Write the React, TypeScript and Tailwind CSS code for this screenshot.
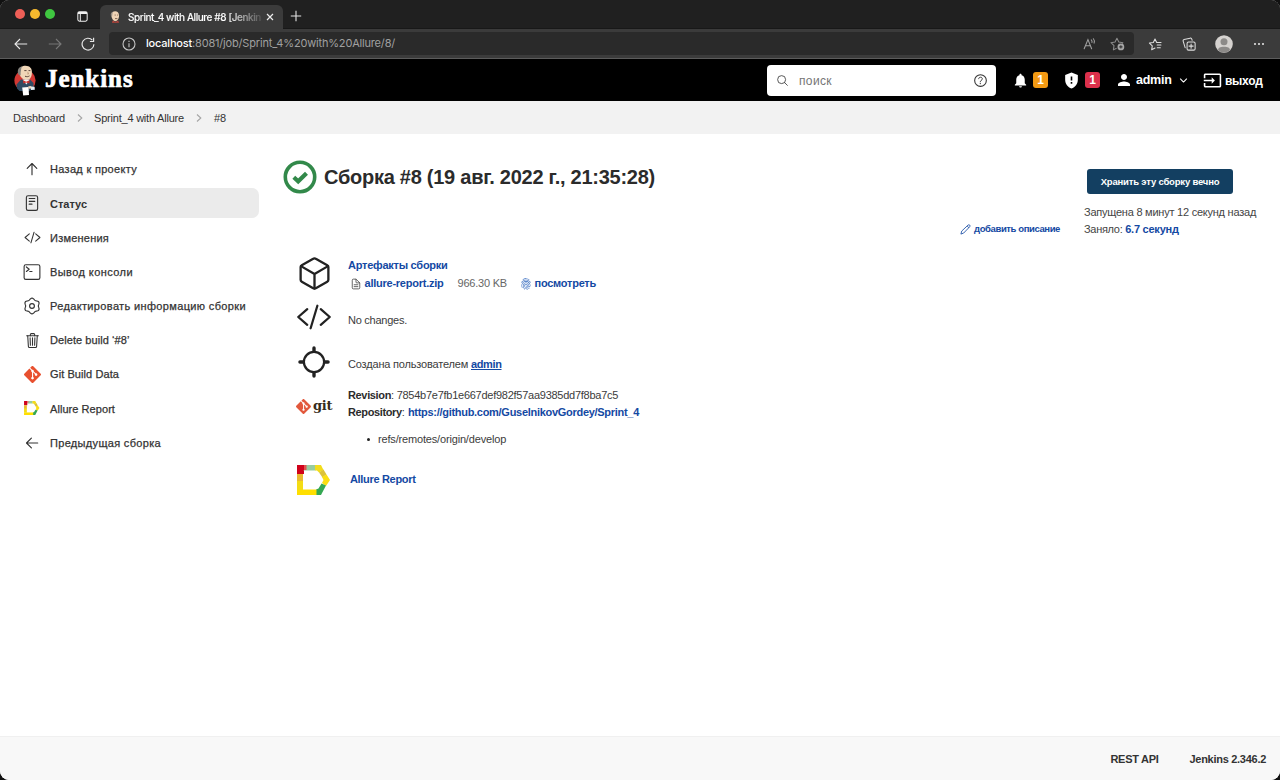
import type { ReactNode } from "react";
import {
  IoChevronDownOutline,
  IoCodeSlashOutline,
  IoCubeOutline,
  IoDocumentTextOutline,
  IoFingerPrintOutline,
  IoHelpCircleOutline,
  IoLocateOutline,
  IoReaderOutline,
  IoSearchOutline,
  IoTerminalOutline,
  IoTrashOutline,
} from "react-icons/io5";
import { MdGppMaybe, MdInput, MdNotifications, MdPerson } from "react-icons/md";
import { SiGit } from "react-icons/si";

function Butler({ className }: { className: string }) {
  return (
    <svg viewBox="0 0 24 31" className={className}>
      <circle cx="12" cy="15.500" r="10.600" fill="#d33833" />
      <path d="M3.500 19.500 L8 14.500 L17 14.500 L20.500 18 L20.500 24 L16 26 L6.500 26 L4 23.500 Z" fill="#2f4a63" />
      <path d="M6 7.500 C5.600 3 8.500 .8 12.500 .8 C16.800 .8 19.200 3.600 18.900 7.500 C18.900 11.500 17.500 14.600 14 14.800 C10 15 6.800 12 6 7.500 Z" fill="#f0d6b7" />
      <path d="M5.400 9.400 C3.800 5.500 5.600 2 9.200 1.300 C7.800 3.400 8.300 5.400 7.700 7.200 L7.600 10.500 Z" fill="#85827d" />
      <path d="M11.300 5.600h2.200M15.500 5.600h1.900M12 11.200c1.700.8 3.400.5 4.500-.3" stroke="#49352d" strokeWidth=".9" fill="none" />
      <path d="M14.600 6.800l1 2.100h-1.400" stroke="#b08a6a" strokeWidth=".7" fill="none" />
      <path d="M9.500 14.600 L13.400 19.500 L16.800 14.600 Z" fill="#f4f4f4" />
      <path d="M10 15.300 L13.200 16.700 L16.600 15.300 L16.500 18.500 L13.200 17.400 L10.200 18.500 Z" fill="#c92f2c" />
      <path d="M9.200 22.500 L15.600 22 L16 30 L10.200 30.600 Z" fill="#fff" />
      <path d="M17.800 21.500 L21.600 21.700 L21.800 24.700 L18 24.900 Z" fill="#e3ecf2" />
      <path d="M15.300 21.300 L18.200 21 L18.200 23.500 L15.600 23.700 Z" fill="#f0d6b7" />
    </svg>
  );
}

function AllureLogo({ className }: { className: string }) {
  return (
    <svg viewBox="0 0 33 30" className={className}>
      <path d="M0 0H7V9H0Z" fill="#d0021b" />
      <path d="M7 0H10V5H7Z" fill="#e0524f" />
      <path d="M9.500 0H18.500V5.500H6.500V5H9.500Z" fill="#97cc9f" />
      <path d="M18 0H24L26.500 5L22 7.500L20 5.500H18Z" fill="#f2dc1c" />
      <path d="M26.500 4.500L29.500 9.500L25.500 12.500L22 7.500Z" fill="#dcc23a" />
      <path d="M29.500 9.500L33 15L29 21L25 18L26.500 15L25 12Z" fill="#fbdf12" />
      <path d="M29 20.500L24 30H19V24.500L21.500 23.500L24.500 18.500Z" fill="#35a853" />
      <path d="M0 24.500H19.500V30H0Z" fill="#ffdf00" />
      <path d="M0 9H6V17H0Z" fill="#e9b930" />
      <path d="M0 16H6V25H0Z" fill="#f4dc14" />
    </svg>
  );
}

// Six soft lobes around a centre hole.
const gearOutline =
  "M" +
  Array.from({ length: 72 }, (_, i) => {
    const a = (i * Math.PI) / 36;
    const r = 7.1 + 0.75 * Math.cos(6 * a);
    return `${(9 + r * Math.sin(a)).toFixed(2)} ${(9 - r * Math.cos(a)).toFixed(2)}`;
  }).join("L") +
  "Z";

function GearIcon() {
  return (
    <svg viewBox="0 0 18 18" className="size-[18px]" fill="none" stroke="#333" strokeWidth="1.15">
      <path d={gearOutline} />
      <circle cx="9" cy="9" r="2.4" />
    </svg>
  );
}

function ReadAloudIcon() {
  return (
    <svg viewBox="0 0 16 16" className="size-[14px]" fill="none" stroke="#a2a2a2" strokeWidth="1.2" strokeLinecap="round">
      <path d="M2.500 13.500 L6.800 3 L11 13.500 M4 10h5.600M10.600 3.200c.9.8 1.100 2 .8 3M13 2c1.200 1.400 1.500 3.400.8 5" />
    </svg>
  );
}

function StarAddIcon() {
  return (
    <svg viewBox="0 0 16 16" className="size-[15px]" fill="none" stroke="#8c8c8c" strokeWidth="1.1" strokeLinejoin="round">
      <path d="M7 13l-3.400 1.800.7-4.500L1 7.100l4.400-.6L7.400 2.400l2 4.100 4.400.6-1 1" />
      <circle cx="11.600" cy="11.600" r="3.600" fill="#a5a5a5" stroke="none" />
      <path d="M11.600 9.900v3.400M9.900 11.600h3.400" stroke="#333" />
    </svg>
  );
}

function FavoritesIcon() {
  return (
    <svg viewBox="0 0 16 16" className="size-[14px]" fill="none" stroke="#dedede" strokeWidth="1.2" strokeLinejoin="round" strokeLinecap="round">
      <path d="M8 12.500l-3.800 2 .7-4.400L1.600 6.900l4.500-.7L8 2.200l1.900 4h5M10.500 9.200h4.300M10.500 12.200h3.600" />
    </svg>
  );
}

function CollectionsIcon() {
  return (
    <svg viewBox="0 0 16 16" className="size-[14px]" fill="none" stroke="#dedede" strokeWidth="1.2" strokeLinejoin="round" strokeLinecap="round">
      <rect x="5.800" y="5.800" width="9.200" height="9.200" rx="1.600" />
      <path d="M10.400 8v4.800M8 10.400h4.800M3.600 12.200L1.300 4.800c-.3-.9.1-1.600 1-1.900l7-1.600c1-.2 1.700.2 2 1.300l.3 1.200" />
    </svg>
  );
}

function Arrow({ className }: { className: string }) {
  return (
    <svg viewBox="0 0 14 14" className={className} fill="none" stroke="#333" strokeWidth="1.15" strokeLinecap="round" strokeLinejoin="round">
      <path d="M7 12.700V1.800M2.200 6.400L7 1.500l4.800 4.900" />
    </svg>
  );
}

function BrowserChrome() {
  return (
    <div className="h-[59px] border-b border-[#5c5c5c] bg-[#3b3b3b] font-['Inter',sans-serif]">
      <div className="flex h-[29px] items-end border-b border-[#181818] bg-[#202020]">
        <div className="flex h-7 w-[100px] shrink-0 items-center pl-[15px]">
          <span className="size-[10px] rounded-full bg-[#ee5f57]" />
          <span className="ml-[5px] size-[10px] rounded-full bg-[#f6b92e]" />
          <span className="ml-[5px] size-[10px] rounded-full bg-[#3fc640]" />
          <svg viewBox="0 0 12 12" className="mt-[5px] ml-[22px] size-[11px]" fill="none" stroke="#f0f0f0" strokeWidth="1.1">
            <rect x=".9" y=".9" width="10.200" height="10.200" rx="1.800" />
            <path d="M1 2.200h10" strokeWidth="2" />
            <path d="M3.600 3v8" />
          </svg>
        </div>
        <div className="-mb-px flex h-6 w-[183px] items-center rounded-t-md bg-[#3b3b3b] pl-[9px]">
          <svg viewBox="0 0 12 13" className="size-3">
            <path d="M2 4C2 1.500 4 .4 6.200 .4S10.400 2 10.400 5 9 11 6.400 11 2 7 2 4Z" fill="#eed3b5" />
            <path d="M1.800 6C.8 3.400 1.600 1.600 4 .9 3 2.400 3.200 4 2.900 5.600Z" fill="#948b82" />
            <path d="M3.600 10.400l2.800 1.400 3-1.400 1 2.400H2.600Z" fill="#b8433b" />
            <path d="M5.600 4.400h1.200M8.400 4.400h1M6 8.200h2.600" stroke="#5c4033" strokeWidth=".8" />
          </svg>
          <span className="ml-[7px] w-[133px] bg-gradient-to-r from-white from-75% to-[#555] bg-clip-text text-[10px] leading-4 font-medium tracking-[-0.42px] whitespace-nowrap text-transparent [-webkit-text-stroke:0.2px_transparent]">
            Sprint_4 with Allure #8 [Jenkin
          </span>
          <svg viewBox="0 0 8 8" className="ml-[5px] size-2" stroke="#ececec" strokeWidth="1.2">
            <path d="M1 1l6 6M7 1L1 7" />
          </svg>
        </div>
        <svg viewBox="0 0 12 12" className="mb-[6px] ml-[7px] size-[12px]" stroke="#e4e4e4" strokeWidth="1.1">
          <path d="M6 .8v10.400M.8 6h10.400" />
        </svg>
      </div>
      <div className="flex h-[29px] items-center">
        <svg viewBox="0 0 14 12" className="ml-[14px] h-3 w-3.5" fill="none" stroke="#e6e6e6" strokeWidth="1.1">
          <path d="M13.200 6H1.200M6 1L1 6l5 5" />
        </svg>
        <svg viewBox="0 0 14 12" className="ml-5 h-3 w-3.5" fill="none" stroke="#777" strokeWidth="1.1">
          <path d="M.8 6h12M8 1l5 5-5 5" />
        </svg>
        <svg viewBox="0 0 14 14" className="ml-[19px] size-3.5" fill="none" stroke="#e6e6e6" strokeWidth="1.2">
          <path d="M12.900 7.200A5.900 5.900 0 1 1 11.400 3.200M12.600 .8v3.700H8.900" />
        </svg>
        <div className="ml-[14px] flex h-[23px] w-[1025px] items-center rounded bg-[#2a2a2a] pl-[13px] text-[11px]">
          <svg viewBox="0 0 14 14" className="size-3.5" fill="none" stroke="#c4c4c4" strokeWidth="1.1">
            <circle cx="7" cy="7" r="6" />
            <path d="M7 6.200v4M7 3.800v1.200" />
          </svg>
          <span className="ml-[10px] font-medium tracking-[-0.2px] text-white">localhost</span>
          <span className="tracking-[-0.18px] text-[#a0a0a0]">:8081/job/Sprint_4%20with%20Allure/8/</span>
          <div className="mr-[9px] ml-auto flex items-center gap-[14px]">
            <ReadAloudIcon />
            <StarAddIcon />
          </div>
        </div>
        <div className="ml-[14px] flex items-center">
          <FavoritesIcon />
          <span className="ml-5 flex">
            <CollectionsIcon />
          </span>
          <svg viewBox="0 0 18 18" className="ml-[19px] size-[18px]">
            <circle cx="9" cy="9" r="8.800" fill="#d5d2cf" />
            <circle cx="9" cy="6.800" r="3.500" fill="#8c8a88" />
            <path d="M3 15.200C3.300 12.600 5 11.700 9 11.700s5.700.9 6 3.500A8.800 8.800 0 0 1 3 15.200Z" fill="#8c8a88" />
          </svg>
          <svg viewBox="0 0 12 4" className="ml-5 h-1 w-3" fill="#ececec">
            <circle cx="2" cy="2" r="1" />
            <circle cx="6" cy="2" r="1" />
            <circle cx="10" cy="2" r="1" />
          </svg>
        </div>
      </div>
    </div>
  );
}

function Header() {
  return (
    <header className="flex h-[42px] items-center bg-black text-[13px] font-bold text-white">
      <Butler className="ml-[13px] h-[31px] w-6" />
      <span className="mb-[3px] ml-2 font-['Liberation_Serif',serif] text-[25px] leading-none tracking-[0.95px] [-webkit-text-stroke:0.7px_white]">Jenkins</span>
      <div className="ml-auto flex h-[31px] w-[229px] items-center rounded bg-white px-[9px]">
        <IoSearchOutline className="size-[13px] text-[#333]" />
        <span className="ml-[10px] pt-px text-[12px] font-normal tracking-[0.37px] text-[#757575]">поиск</span>
        <IoHelpCircleOutline className="-mr-[2px] ml-auto size-[17px] text-[#333]" />
      </div>
      <MdNotifications className="ml-[16px] size-[17px]" />
      <span className="ml-[4px] flex h-4 w-[15px] items-center justify-center rounded-[3px] bg-[#f39a13] text-[12px]">1</span>
      <MdGppMaybe className="ml-[14px] size-[19px]" />
      <span className="ml-[4px] flex h-4 w-[15px] items-center justify-center rounded-[3px] bg-[#dc304b] text-[12px]">1</span>
      <MdPerson className="ml-[15px] size-[18px]" />
      <span className="ml-[3px] w-[36px] pt-px text-[12.5px] tracking-[-0.26px]">admin</span>
      <IoChevronDownOutline className="ml-[6px] size-[11px]" />
      <MdInput className="ml-[14px] size-[19px]" />
      <span className="mr-[17px] ml-[3px] w-[38px] pt-px text-[12px] tracking-[-0.26px]">выход</span>
    </header>
  );
}

function Chevron() {
  return (
    <svg viewBox="0 0 6 8" className="h-2 w-1.5" fill="none" stroke="#a5a5a5" strokeWidth="1.1">
      <path d="M1 .5L4.800 4 1 7.500" />
    </svg>
  );
}

function Task({ icon, active, children }: { icon: ReactNode; active?: boolean; children: ReactNode }) {
  return (
    <div className={`flex h-[30.2px] items-center rounded-[7px] pt-px pl-[9px] ${active ? "bg-[#ebebeb] font-bold" : "[-webkit-text-stroke:0.25px_#333]"}`}>
      <span className="flex w-[18px] justify-center text-[#333] [-webkit-text-stroke:0]">{icon}</span>
      <span className="ml-[9px] pt-px whitespace-nowrap">{children}</span>
    </div>
  );
}

function Sidebar() {
  return (
    <nav className="mt-[19.5px] ml-[14px] flex w-[245px] shrink-0 flex-col gap-1 text-[11px] text-[#333]">
      <Task icon={<Arrow className="size-[14px]" />}>
        <span className="tracking-[0.31px]">Назад к проекту</span>
      </Task>
      <Task active icon={<IoReaderOutline className="size-[18px]" />}>
        Статус
      </Task>
      <Task icon={<IoCodeSlashOutline className="size-[17px]" />}>
        <span className="tracking-[0.22px]">Изменения</span>
      </Task>
      <Task icon={<IoTerminalOutline className="size-[18px]" />}>
        <span className="tracking-[0.42px]">Вывод консоли</span>
      </Task>
      <Task icon={<GearIcon />}>
        <span className="tracking-[0.355px]">Редактировать информацию сборки</span>
      </Task>
      <Task icon={<IoTrashOutline className="size-[17px]" />}>
        <span className="tracking-[0.07px]">Delete build ‘#8’</span>
      </Task>
      <Task icon={<SiGit className="size-[17px] text-[#e8502f]" />}>
        <span className="tracking-[0.08px]">Git Build Data</span>
      </Task>
      <Task icon={<AllureLogo className="h-[14px] w-[15.5px]" />}>
        <span className="tracking-[0.06px]">Allure Report</span>
      </Task>
      <Task icon={<Arrow className="size-[14px] -rotate-90" />}>
        <span className="tracking-[0.32px]">Предыдущая сборка</span>
      </Task>
    </nav>
  );
}

function Row({ icon, height, children }: { icon: ReactNode; height: string; children: ReactNode }) {
  return (
    <div className={`flex items-center ${height}`}>
      <div className="flex w-[60px] shrink-0 items-center justify-center text-[#222]">{icon}</div>
      <div className="ml-1 whitespace-nowrap">{children}</div>
    </div>
  );
}

function Build() {
  return (
    <section className="mt-[26px] ml-[25px] w-[776px] shrink-0">
      <div className="flex h-[34px] items-center">
        <svg viewBox="0 0 34 34" className="-ml-px size-[34px]" fill="none" stroke="#32894a">
          <circle cx="17" cy="17" r="14.700" strokeWidth="3.600" />
          <path d="M10.800 17.300l4.400 4 8.300-8" strokeWidth="4.200" />
        </svg>
        <h1 className="ml-[7px] text-[20px] font-bold tracking-[-0.26px] whitespace-nowrap text-[#2b2b2b]">Сборка #8 (19 авг. 2022 г., 21:35:28)</h1>
      </div>
      <div className="mt-[25px] flex h-5 items-center justify-end text-[9.5px] font-bold tracking-[-0.4px] text-[#1449a3]">
        <svg viewBox="0 0 12 12" className="mr-[3px] size-[11px]" fill="none" stroke="#1449a3" strokeWidth=".9" strokeLinejoin="round">
          <path d="M1 11l.9-3.300L8.800 1.200c.6-.5 1.300-.5 1.800 0s.5 1.200 0 1.800L4 9.900ZM7.800 2.200l1.900 1.900" />
        </svg>
        добавить описание
      </div>
      <div className="mt-3 text-[11px] text-[#3c3c3c]">
        <Row height="h-11" icon={<IoCubeOutline className="size-[37px]" />}>
          <div className="pt-px leading-[18px]">
            <div className="font-bold tracking-[-0.25px] text-[#1449a3]">Артефакты сборки</div>
            <div className="flex items-center">
              <IoDocumentTextOutline className="mt-[2px] ml-[2px] size-3 text-[#333]" />
              <span className="ml-[2.5px] w-[80px] font-bold tracking-[-0.24px] text-[#1449a3]">allure-report.zip</span>
              <span className="ml-[13px] w-[49px] tracking-[-0.21px] text-[#666]">966.30 KB</span>
              <IoFingerPrintOutline className="mt-[2px] ml-[13.5px] size-3 text-[#2f66bd]" />
              <span className="ml-[2.5px] font-bold tracking-[-0.25px] text-[#1449a3]">посмотреть</span>
            </div>
          </div>
        </Row>
        <Row height="h-11" icon={<IoCodeSlashOutline className="size-[36px]" />}>
          <div className="pt-[6px] tracking-[-0.25px]">No changes.</div>
        </Row>
        <Row height="h-[45px]" icon={<IoLocateOutline className="size-[36px]" />}>
          <div className="pt-[5px]">
            <span className="tracking-[-0.18px]">Создана пользователем </span>
            <span className="font-bold tracking-[-0.38px] text-[#1449a3] underline">admin</span>
          </div>
        </Row>
        <div className="flex h-[69px] items-start">
          <div className="mt-[13px] flex w-[60px] shrink-0 items-center pl-3">
            <SiGit className="size-[15px] text-[#e2583c]" />
            <span className="ml-[2px] font-['DejaVu_Serif',serif] text-[13px] leading-[18px] font-bold tracking-[-0.3px] text-[#362c1c]">git</span>
          </div>
          <div className="mt-[3px] ml-1 leading-[17px] whitespace-nowrap">
            <div>
              <b className="tracking-[-0.35px] text-[#2c2c2c]">Revision</b>
              <span className="tracking-[-0.26px]">: 7854b7e7fb1e667def982f57aa9385dd7f8ba7c5</span>
            </div>
            <div>
              <b className="tracking-[-0.37px] text-[#2c2c2c]">Repository</b>:{" "}
              <span className="font-bold tracking-[-0.29px] text-[#1449a3]">https://github.com/GuselnikovGordey/Sprint_4</span>
            </div>
            <div className="mt-[9.5px] flex items-center pl-[19px]">
              <span className="mr-2 size-[3px] rounded-full bg-[#222]" />
              <span className="tracking-[-0.17px]">refs/remotes/origin/develop</span>
            </div>
          </div>
        </div>
        <Row height="h-[53px]" icon={<AllureLogo className="-ml-[2px] h-[30px] w-[33px]" />}>
          <span className="ml-[2px] font-bold tracking-[-0.32px] text-[#1449a3]">Allure Report</span>
        </Row>
      </div>
    </section>
  );
}

export default function App() {
  return (
    <div className="h-[780px] w-[1280px] overflow-hidden bg-[#111]">
      <div className="flex h-full flex-col overflow-hidden rounded-[9px] bg-white font-['Liberation_Sans',Arial,sans-serif]">
        <BrowserChrome />
        <Header />
        <div className="flex h-[33px] shrink-0 items-center bg-[#f2f2f2] pl-[13px] text-[11px] text-[#333]">
          <span className="w-[53px] pt-px tracking-[-0.2px]">Dashboard</span>
          <span className="ml-[11px]"><Chevron /></span>
          <span className="ml-[11px] w-[91px] pt-px tracking-[-0.21px]">Sprint_4 with Allure</span>
          <span className="ml-[11px]"><Chevron /></span>
          <span className="ml-[12px] pt-px tracking-[-0.2px]">#8</span>
        </div>
        <main className="flex flex-1">
          <Sidebar />
          <Build />
          <aside className="mt-[35px] ml-[24px] text-[11px] leading-[17px] whitespace-nowrap text-[#444]">
            <div className="mb-[10px] ml-[3px] flex h-[25px] w-[146px] items-center justify-center rounded-[3px] bg-[#133f61] text-[9.5px] font-bold tracking-[-0.19px] text-white">
              Хранить эту сборку вечно
            </div>
            <div className="tracking-[-0.235px]">Запущена 8 минут 12 секунд назад</div>
            <div>
              <span className="tracking-[-0.3px]">Заняло: </span>
              <span className="font-bold tracking-[-0.23px] text-[#1449a3]">6.7 секунд</span>
            </div>
          </aside>
        </main>
        <footer className="flex h-11 items-center justify-end border-t border-[#f0f0f0] bg-[#f8f8f8] pt-[2px] pr-[14px] text-[11px] font-bold text-[#333]">
          <span className="mr-[31px] tracking-[-0.29px]">REST API</span>
          <span className="tracking-[-0.28px]">Jenkins 2.346.2</span>
        </footer>
      </div>
    </div>
  );
}
